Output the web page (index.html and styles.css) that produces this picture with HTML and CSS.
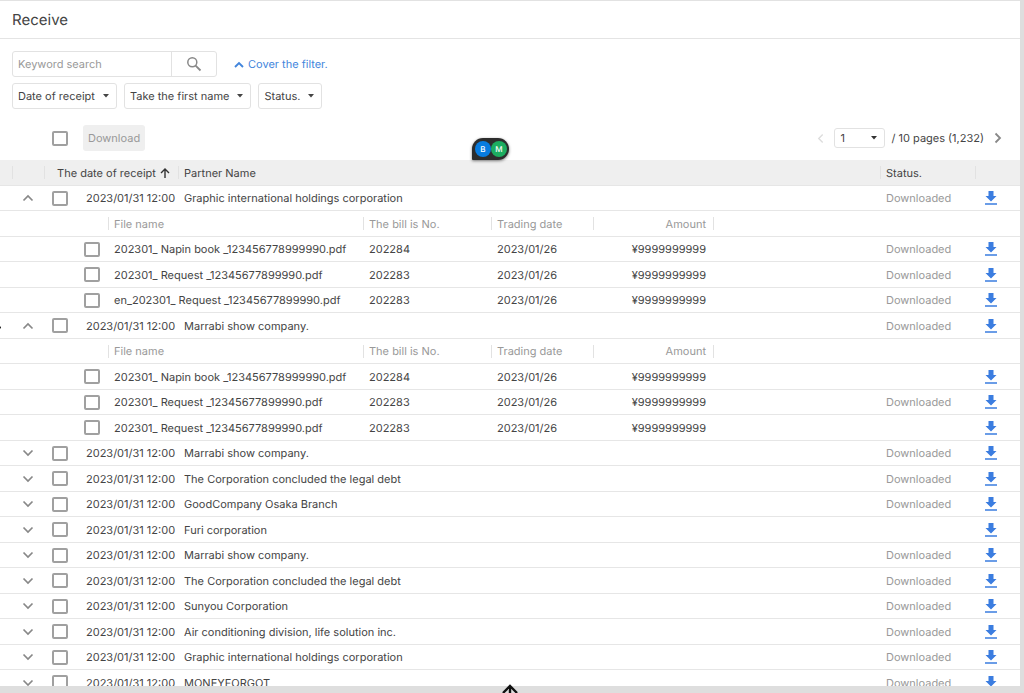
FILE: index.html
```html
<!DOCTYPE html>
<html lang="en">
<head>
    <meta charset="UTF-8">
    <meta name="viewport" content="width=device-width, initial-scale=1.0">
    <title>Receive</title>
    <link rel="stylesheet" href="styles.css">
</head>
<body>
    <svg class="sprite" aria-hidden="true">
        <symbol id="icon-up" viewBox="0 0 12 8"><path d="M1.5 6.5 6 2l4.5 4.5" fill="none" stroke="currentColor" stroke-width="1.7"/></symbol>
        <symbol id="icon-down" viewBox="0 0 12 8"><path d="M1.5 1.5 6 6l4.5-4.5" fill="none" stroke="currentColor" stroke-width="1.7"/></symbol>
        <symbol id="icon-left" viewBox="0 0 8 12"><path d="M6.5 1.5 2 6l4.5 4.5" fill="none" stroke="currentColor" stroke-width="1.6"/></symbol>
        <symbol id="icon-right" viewBox="0 0 8 12"><path d="M1.5 1.5 6 6l-4.5 4.5" fill="none" stroke="currentColor" stroke-width="1.8"/></symbol>
        <symbol id="icon-caret" viewBox="0 0 6 4"><path d="M0 0h6L3 3.5z" fill="currentColor"/></symbol>
        <symbol id="icon-download" viewBox="0 0 12 14"><path d="M3.5 0h5v5h3L6 10.5.5 5h3zM0 12.2h12v1.6H0z" fill="currentColor"/></symbol>
        <symbol id="icon-arrow" viewBox="0 0 10 10"><path d="M5 10V1M1 5l4-4 4 4" fill="none" stroke="currentColor" stroke-width="1.4"/></symbol>
    </svg>

    <main class="panel">
        <header class="page-header">
            <h1>Receive</h1>
        </header>

        <section class="filters">
            <div class="filter-row">
                <form class="search">
                    <input type="text" placeholder="Keyword search" aria-label="Keyword search">
                    <button type="button" aria-label="Search">
                        <svg width="16" height="16" viewBox="0 0 16 16"><circle cx="6.3" cy="6.3" r="4.5" fill="none" stroke="currentColor" stroke-width="1.5"/><path d="M9.6 9.6l4.9 4.9" stroke="currentColor" stroke-width="1.8"/></svg>
                    </button>
                </form>
                <a class="filter-link" href="#"><svg width="10" height="7" viewBox="0 0 10 7"><path d="M1 6l4-4 4 4" fill="none" stroke="currentColor" stroke-width="1.9"/></svg>Cover the filter.</a>
            </div>
            <div class="filter-row filter-buttons">
                <button type="button" class="dropdown">Date of receipt<svg width="6" height="4"><use href="#icon-caret"/></svg></button>
                <button type="button" class="dropdown">Take the first name<svg width="6" height="4"><use href="#icon-caret"/></svg></button>
                <button type="button" class="dropdown">Status.<svg width="6" height="4"><use href="#icon-caret"/></svg></button>
            </div>
        </section>

        <section class="toolbar">
            <input type="checkbox" aria-label="Select all">
            <button type="button" class="download-all" disabled>Download</button>
            <nav class="pager">
                <button type="button" class="icon-button" aria-label="Previous page" disabled><svg width="7" height="11"><use href="#icon-left"/></svg></button>
                <select id="page" aria-label="Page"><option>1</option></select>
                <label for="page">/ 10 pages (1,232)</label>
                <button type="button" class="icon-button" aria-label="Next page"><svg width="8" height="12"><use href="#icon-right"/></svg></button>
            </nav>
            <div class="presence">
                <span class="avatar blue">B</span>
                <span class="avatar green">M</span>
            </div>
        </section>

        <table class="receipts">
            <colgroup>
                <col class="col-toggle">
                <col class="col-check">
                <col class="col-check">
                <col class="col-date">
                <col class="col-name">
                <col class="col-bill">
                <col class="col-trade">
                <col class="col-amount">
                <col>
                <col class="col-status">
                <col class="col-action">
            </colgroup>
            <thead>
                <tr>
                    <th class="inset"></th>
                    <th class="divided date-head" colspan="3">The date of receipt <svg width="10" height="10"><use href="#icon-arrow"/></svg></th>
                    <th class="divided" colspan="5">Partner Name</th>
                    <th class="divided">Status.</th>
                    <th class="divided"></th>
                </tr>
            </thead>
            <tbody id="rows"></tbody>
        </table>
    </main>

    <svg class="edge-mark" width="2" height="3"><path d="M0 0l1 1.5L0 3z"/></svg>
    <svg class="edge-arrow" width="18" height="10" viewBox="0 0 18 10"><path d="M9 10V3M2 9l7-7 7 7" fill="none" stroke="#111" stroke-width="2.4"/></svg>

    <script>
        const D = 'Downloaded';
        const receipts = [
            { partner: 'Graphic international holdings corporation', status: D, files: [
                ['202301_ Napin book _123456778999990.pdf', '202284', D],
                ['202301_ Request _12345677899990.pdf', '202283', D],
                ['en_202301_ Request _12345677899990.pdf', '202283', D]
            ] },
            { partner: 'Marrabi show company.', status: D, files: [
                ['202301_ Napin book _123456778999990.pdf', '202284', ''],
                ['202301_ Request _12345677899990.pdf', '202283', D],
                ['202301_ Request _12345677899990.pdf', '202283', '']
            ] },
            { partner: 'Marrabi show company.', status: D },
            { partner: 'The Corporation concluded the legal debt', status: D },
            { partner: 'GoodCompany Osaka Branch', status: D },
            { partner: 'Furi corporation', status: '' },
            { partner: 'Marrabi show company.', status: D },
            { partner: 'The Corporation concluded the legal debt', status: D },
            { partner: 'Sunyou Corporation', status: D },
            { partner: 'Air conditioning division, life solution inc.', status: D },
            { partner: 'Graphic international holdings corporation', status: D },
            { partner: 'MONEYFORGOT', status: D }
        ];

        const statusCells = (status, name) => `
            <td class="muted">${status}</td>
            <td class="action"><button type="button" class="icon-button" aria-label="Download ${name}"><svg width="12" height="14"><use href="#icon-download"/></svg></button></td>`;

        let html = '';
        receipts.forEach(r => {
            const icon = r.files ? 'up' : 'down';
            html += `<tr>
                <td class="toggle"><button type="button" class="icon-button" aria-label="Toggle files"><svg width="12" height="8"><use href="#icon-${icon}"/></svg></button></td>
                <td><input type="checkbox" aria-label="Select ${r.partner}"></td>
                <td class="date" colspan="2">2023/01/31 12:00</td>
                <td colspan="5">${r.partner}</td>
                ${statusCells(r.status, r.partner)}
            </tr>`;
            if (!r.files) return;
            html += `<tr class="file-head">
                <th colspan="3"></th>
                <th class="divided" colspan="2">File name</th>
                <th class="divided">The bill is No.</th>
                <th class="divided">Trading date</th>
                <th class="divided amount">Amount</th>
                <th class="divided" colspan="3"></th>
            </tr>`;
            r.files.forEach(([name, bill, status]) => {
                html += `<tr>
                    <td colspan="2"></td>
                    <td><input type="checkbox" aria-label="Select ${name}"></td>
                    <td colspan="2">${name}</td>
                    <td>${bill}</td>
                    <td>2023/01/26</td>
                    <td class="amount">¥9999999999</td>
                    <td></td>
                    ${statusCells(status, name)}
                </tr>`;
            });
        });
        document.getElementById('rows').innerHTML = html;
    </script>
</body>
</html>
```
FILE: styles.css
```css
* {
    box-sizing: border-box;
}
body {
    margin: 0;
    height: 100vh;
    padding: 0 4px 7px 0;
    overflow: hidden;
    background: #dedede;
    color: #444;
    font-family: Inter, "Liberation Sans", sans-serif;
    font-size: 11px;
    line-height: 16px;
    text-rendering: geometricPrecision;
}
button, input, select {
    font: inherit;
    color: inherit;
    text-rendering: inherit;
}
button {
    padding: 0;
    border: 0;
    background: none;
}
svg {
    display: block;
    flex: none;
}
.sprite {
    position: absolute;
    width: 0;
    height: 0;
}
.panel {
    height: 100%;
    overflow: hidden;
    background: #fff;
    border-top: 1px solid #e2e2e2;
}
.page-header {
    height: 38px;
    display: flex;
    align-items: center;
    padding: 1px 12px 0;
    border-bottom: 1px solid #e4e4e4;
}
h1 {
    margin: 0;
    font-size: 15px;
    font-weight: 400;
    line-height: 20px;
}

/* filters */
.filters {
    display: flex;
    flex-direction: column;
    gap: 6px;
    padding: 12px 12px 0;
}
.filter-row {
    display: flex;
    align-items: center;
    gap: 17px;
}
.filter-buttons {
    gap: 7px;
}
.search {
    display: flex;
    width: 205px;
    height: 26px;
    border: 1px solid #e2e2e2;
    border-radius: 3px;
}
.search input {
    flex: 1;
    min-width: 0;
    padding: 0 5px;
    border: 0;
    background: none;
}
.search input::placeholder {
    color: #999;
}
.search button {
    display: flex;
    align-items: center;
    justify-content: center;
    width: 45px;
    border-left: 1px solid #e2e2e2;
    color: #888;
}
.filter-link {
    display: flex;
    align-items: center;
    gap: 4px;
    color: #4285dc;
    text-decoration: none;
}
.dropdown {
    display: flex;
    align-items: center;
    gap: 8px;
    height: 26px;
    padding: 0 7px 0 5px;
    border: 1px solid #e2e2e2;
    border-radius: 3px;
}

/* toolbar */
.toolbar {
    position: relative;
    display: flex;
    align-items: center;
    gap: 15px;
    height: 51px;
    padding: 7px 14px 0 52px;
}
input[type="checkbox"] {
    appearance: none;
    display: block;
    flex: none;
    width: 16px;
    height: 15px;
    margin: 0;
    border: 2px solid #a0a0a0;
    border-radius: 2px;
    background: #fff;
}
.download-all {
    height: 26px;
    padding: 0 5px;
    border-radius: 3px;
    background: #efefef;
    color: #999;
}
.pager {
    display: flex;
    align-items: center;
    gap: 6px;
    margin-left: auto;
}
.pager select {
    appearance: none;
    width: 51px;
    height: 20px;
    padding: 0 5px;
    border: 1px solid #e2e2e2;
    border-radius: 3px;
    background: url("data:image/svg+xml,%3Csvg xmlns='http://www.w3.org/2000/svg' width='6' height='4'%3E%3Cpath d='M0 0h6L3 3.5z' fill='%23333'/%3E%3C/svg%3E") no-repeat right 7px center;
}
.pager .icon-button {
    width: 16px;
}
.icon-button {
    display: flex;
    align-items: center;
    justify-content: center;
    color: #888;
}
.icon-button:disabled {
    color: #ddd;
}
.presence {
    position: absolute;
    left: 472px;
    bottom: 0;
    display: flex;
    align-items: center;
    height: 22px;
    padding: 0 2px 0 3px;
    border-radius: 11px 11px 11px 1px;
    background: #2d2d2d;
    box-shadow: 0 1px 3px rgba(0, 0, 0, 0.5);
}
.avatar {
    width: 16px;
    height: 16px;
    border-radius: 50%;
    color: #fff;
    font-size: 8px;
    font-weight: 500;
    text-align: center;
}
.blue {
    background: #087ce0;
}
.green {
    background: #1cad60;
}

/* table */
.receipts {
    width: 100%;
    table-layout: fixed;
    border-spacing: 0;
}
.col-toggle { width: 44px; }
.col-check { width: 32px; }
.col-date { width: 70px; }
.col-name { width: 185px; }
.col-bill { width: 128px; }
.col-trade { width: 102px; }
.col-amount { width: 120px; }
.col-status { width: 95px; }
.col-action { width: 45px; }
.receipts th, .receipts td {
    height: 25px;
    padding: 0 6px;
    border-bottom: 1px solid #e6e6e6;
    font-weight: 400;
    text-align: left;
    white-space: nowrap;
}
/* rows alternate so that ten of them take 255px */
.receipts tbody tr:nth-child(even) td,
.receipts tbody tr:nth-child(even) th {
    height: 26px;
}
.receipts thead th {
    height: 26px;
    background-color: #efefef;
    border-bottom-color: #e6e6e6;
}
.receipts .divided, .receipts .inset {
    background-image: linear-gradient(#e2e2e2, #e2e2e2);
    background-repeat: no-repeat;
    background-position: 0 center;
    background-size: 1px 13px;
}
.receipts .inset {
    background-position: 12px center;
}
.receipts .date-head {
    padding-right: 8px;
    text-align: right;
}
.date-head svg {
    display: inline-block;
    margin-left: 1px;
    vertical-align: -1px;
    color: #333;
}
.receipts td input[type="checkbox"] {
    margin-left: 2px;
}
.receipts .date {
    padding-left: 10px;
}
.receipts .toggle {
    padding-left: 22px;
}
.receipts .amount {
    padding-right: 7px;
    text-align: right;
}
.receipts .muted, .receipts .file-head th {
    color: #999;
}
.receipts .action {
    padding-left: 10px;
}
.action .icon-button {
    color: #3b7de0;
}

/* marks that stick out at the window edge */
.edge-mark {
    position: absolute;
    left: 0;
    top: 326px;
}
.edge-arrow {
    position: absolute;
    left: 50%;
    bottom: -1px;
    margin-left: -11px;
}
```
